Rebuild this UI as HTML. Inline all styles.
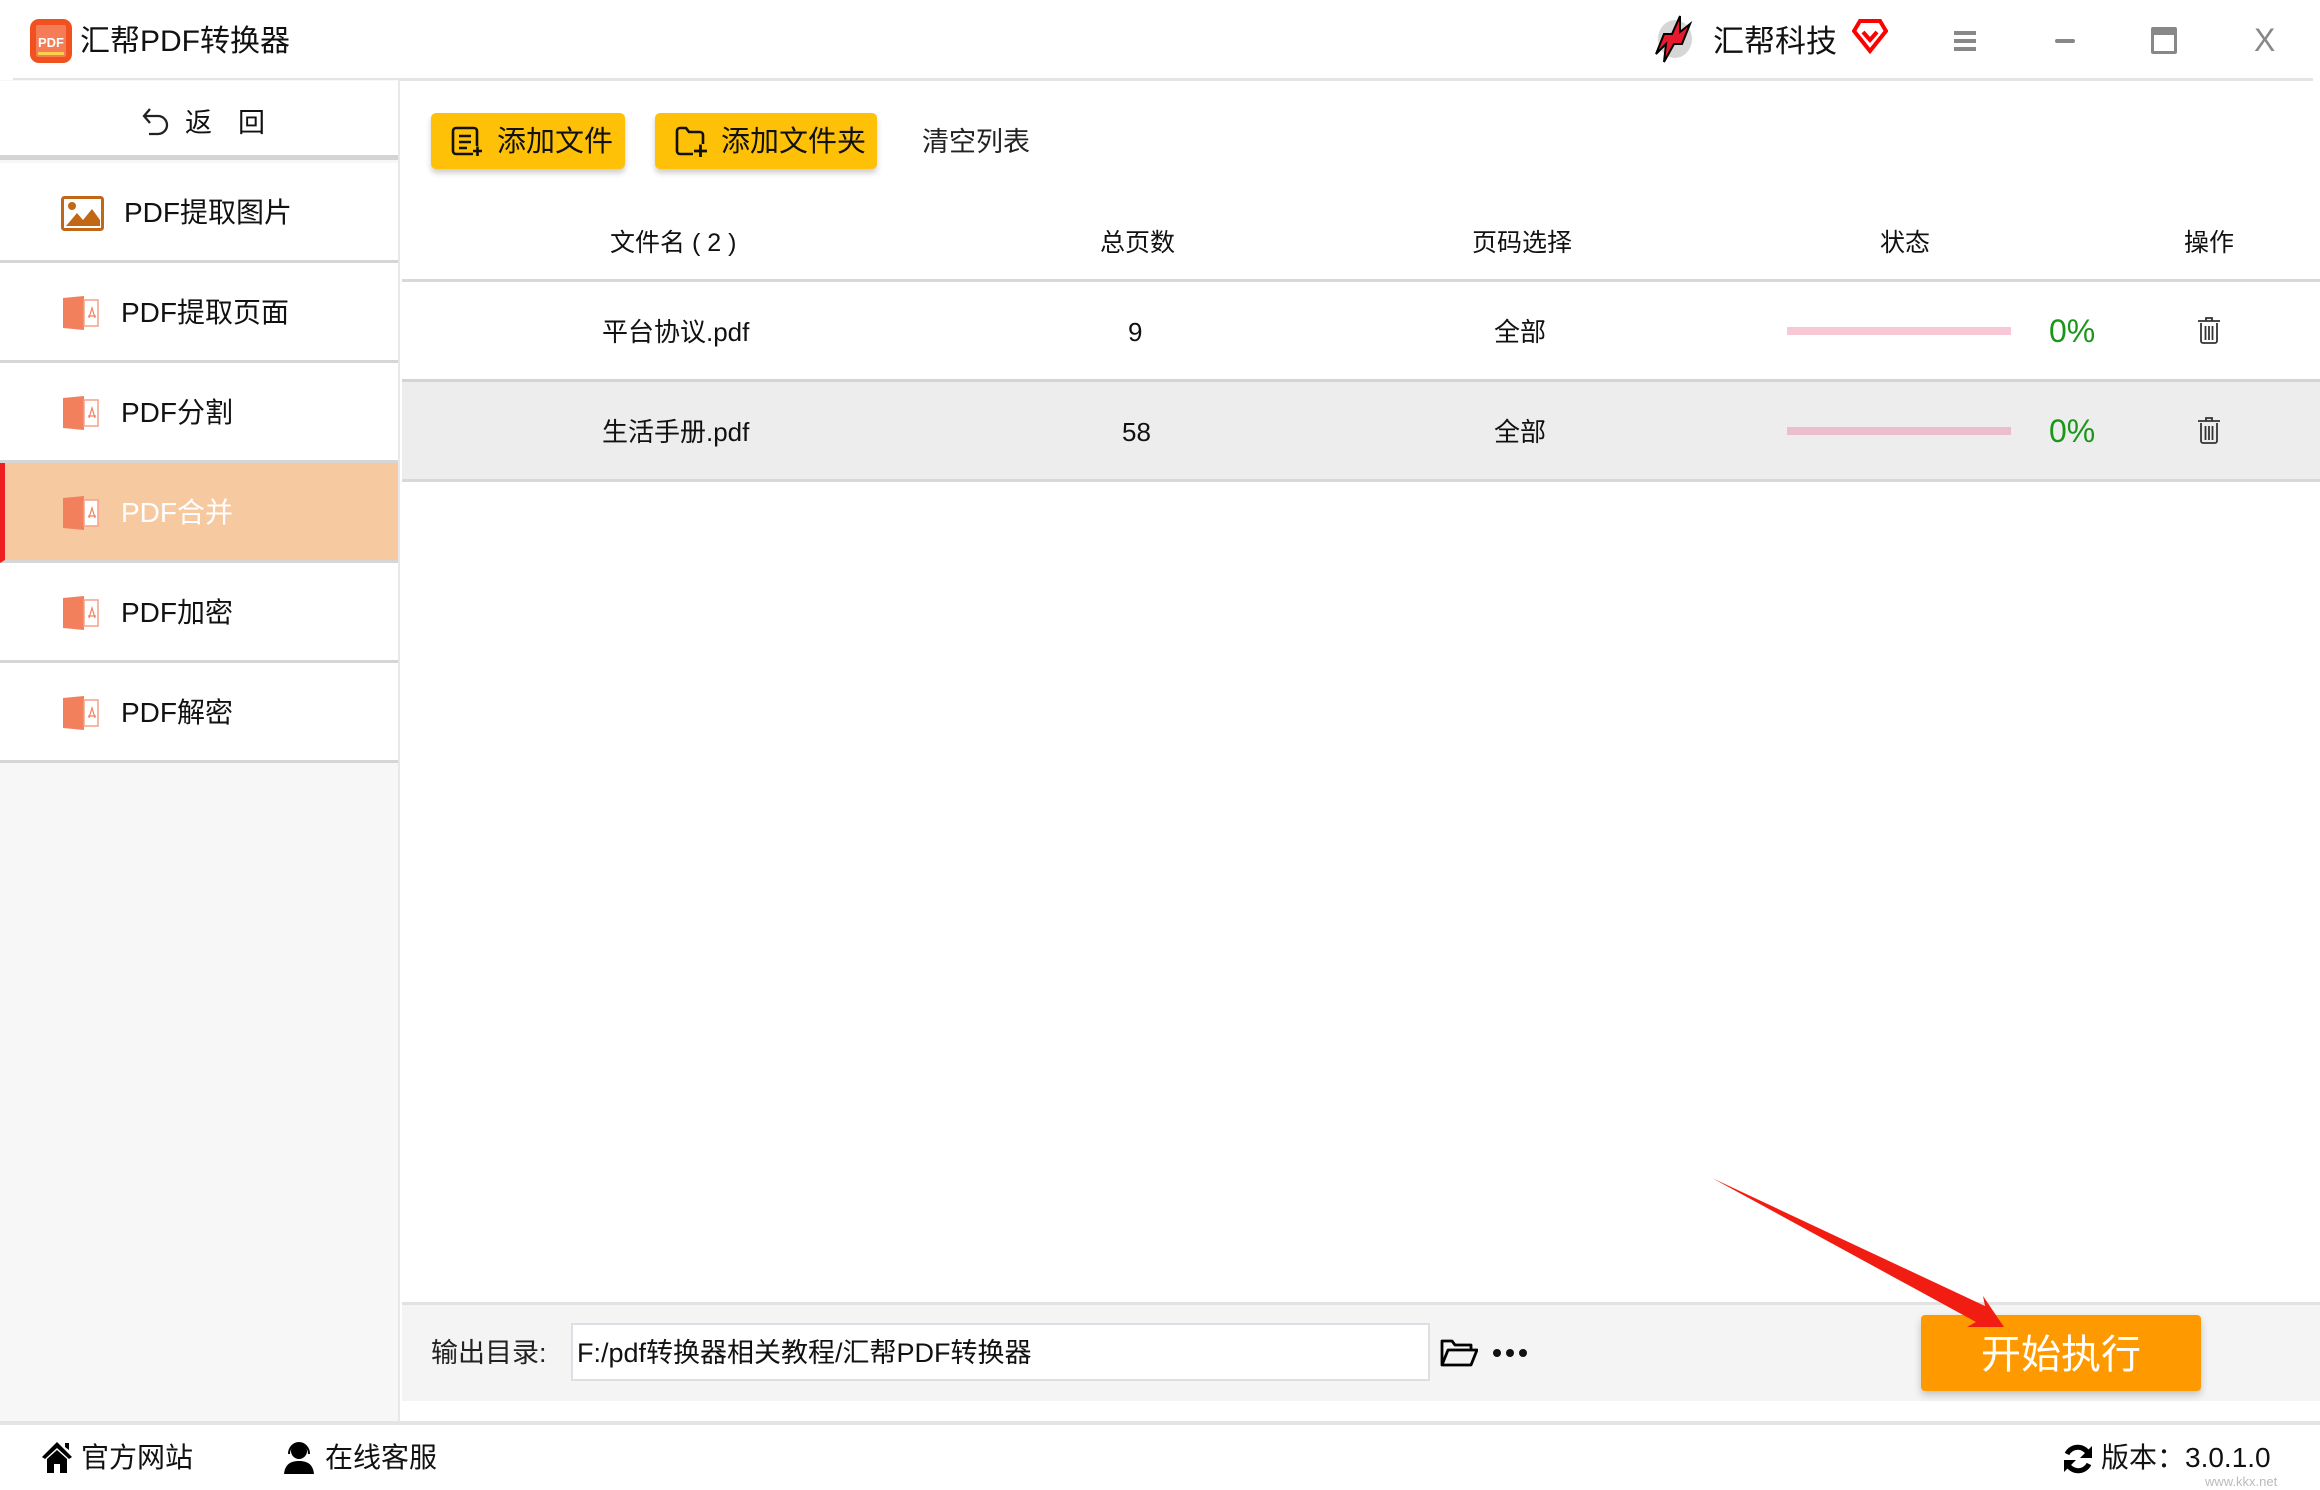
<!DOCTYPE html>
<html><head><meta charset="utf-8">
<style>
*{margin:0;padding:0;box-sizing:border-box}
body{width:2320px;height:1490px;position:relative;background:#fff;font-family:"Liberation Sans","Noto Sans CJK SC",sans-serif;color:#111;overflow:hidden}
.a{position:absolute}
.t{position:absolute;white-space:nowrap;line-height:1}
.side{left:0;top:80px;width:400px;height:1343px;background:#f7f7f7;border-right:2px solid #e8e8e8}
.item{position:absolute;left:0;width:398px;height:100px;background:#fff;border-bottom:3px solid #d6d6d6}
.item .t{left:121px;top:36px;font-size:28px}
.btn{position:absolute;top:113px;height:56px;background:#ffc107;border-radius:5px;box-shadow:0 4px 6px rgba(0,0,0,.2);font-size:29px}
.hd{font-size:25px;top:231px}
.cell{font-size:26px}
</style></head><body>
<svg class="a" style="left:30px;top:19px" width="42" height="44" viewBox="0 0 42 44"><rect x="0" y="0" width="42" height="44" rx="9" fill="#f1501f"/><rect x="6" y="6" width="30" height="32" rx="2" fill="#fff" opacity=".25"/><text x="21" y="28" font-size="13" font-weight="bold" fill="#fff" text-anchor="middle" font-family="Liberation Sans">PDF</text><rect x="8" y="33" width="26" height="3" fill="#ffd24a"/></svg>
<div class="t" style="left:80px;top:27px;font-size:30px">汇帮PDF转换器</div>
<div class="a" style="left:13px;top:78px;width:2300px;height:3px;background:#e4e4e4"></div>
<svg class="a" style="left:1650px;top:14px" width="46" height="50" viewBox="0 0 46 50"><ellipse cx="25" cy="25" rx="17" ry="19" fill="#bbb" opacity=".6"/><path d="M30 2 L22 20 L14 20 L6 40 L16 30 L14 48 L24 30 L32 30 L40 10 L30 18 Z" fill="#e8192c" stroke="#000" stroke-width="2"/></svg>
<div class="t" style="left:1713px;top:26px;font-size:31px">汇帮科技</div>
<svg class="a" style="left:1852px;top:18px" width="36" height="36" viewBox="0 0 36 36"><path d="M8 3 H28 L34 13 L18 33 L2 13 Z" fill="none" stroke="#f00" stroke-width="4"/><path d="M11 14 L18 22 L25 14" fill="none" stroke="#f00" stroke-width="4"/></svg>
<div class="a" style="left:1954px;top:31px;width:22px;height:4px;background:#888"></div>
<div class="a" style="left:1954px;top:39px;width:22px;height:4px;background:#888"></div>
<div class="a" style="left:1954px;top:47px;width:22px;height:4px;background:#888"></div>
<div class="a" style="left:2055px;top:39px;width:20px;height:4px;background:#888;border-radius:2px"></div>
<div class="a" style="left:2151px;top:27px;width:26px;height:27px;border:3px solid #888;border-top:8px solid #888;border-radius:2px"></div>
<div class="t" style="left:2254px;top:24px;font-size:32px;color:#888">X</div>

<div class="a side"></div>
<div class="a" style="left:0;top:81px;width:398px;height:79px;background:#fff;border-bottom:5px solid #d4d4d4"></div>
<svg class="a" style="left:142px;top:107px" width="28" height="30" viewBox="0 0 28 30"><path d="M8 2 L2 9 L8 16 M2 9 H16 A9 9 0 0 1 16 27 H7" fill="none" stroke="#222" stroke-width="2.3"/></svg>
<div class="t" style="left:185px;top:110px;font-size:27px">返</div>
<div class="t" style="left:238px;top:110px;font-size:27px">回</div>

<div class="item" style="top:163px"><svg class="a" style="left:61px;top:33px" width="43" height="35" viewBox="0 0 43 35"><rect x="1.5" y="1.5" width="40" height="32" rx="2" fill="none" stroke="#c26716" stroke-width="3"/><circle cx="11" cy="10" r="4" fill="#c26716"/><path d="M5 30 L16 17 L22 24 L31 13 L39 24 V30 Z" fill="#c26716"/></svg><div class="t" style="left:124px">PDF提取图片</div></div>
<div class="item" style="top:263px"></div>
<div class="item" style="top:363px"></div>
<div class="item" style="top:463px;background:#f7c9a0;border-left:5px solid #f01f1f"></div>
<div class="item" style="top:563px"></div>
<div class="item" style="top:663px"></div>
<div class="t" style="left:121px;top:299px;font-size:28px">PDF提取页面</div>
<div class="t" style="left:121px;top:399px;font-size:28px">PDF分割</div>
<div class="t" style="left:121px;top:499px;font-size:28px;color:#fff">PDF合并</div>
<div class="t" style="left:121px;top:599px;font-size:28px">PDF加密</div>
<div class="t" style="left:121px;top:699px;font-size:28px">PDF解密</div>
<svg width="0" height="0" style="position:absolute"><defs><g id="pd"><path d="M0 2 L21 0 V34 L0 32 Z" fill="#f2805c"/><rect x="21" y="4" width="14" height="26" fill="#fff" stroke="#f5a088" stroke-width="1.5"/><path d="M26 22 L29 12 L32 22 M25 20 L33 20" stroke="#f2805c" stroke-width="1.2" fill="none"/></g></defs></svg>
<svg class="a" style="left:63px;top:296px" width="37" height="36"><use href="#pd"/></svg>
<svg class="a" style="left:63px;top:396px" width="37" height="36"><use href="#pd"/></svg>
<svg class="a" style="left:63px;top:496px" width="37" height="36"><use href="#pd"/></svg>
<svg class="a" style="left:63px;top:596px" width="37" height="36"><use href="#pd"/></svg>
<svg class="a" style="left:63px;top:696px" width="37" height="36"><use href="#pd"/></svg>

<div class="btn" style="left:431px;width:194px"><svg class="a" style="left:20px;top:13px" width="32" height="32" viewBox="0 0 32 32"><path d="M22 28 H5 A3 3 0 0 1 2 25 V5 A3 3 0 0 1 5 2 H23 A3 3 0 0 1 26 5 V20" fill="none" stroke="#111" stroke-width="2.6"/><path d="M8 10 H20 M8 16 H20 M8 22 H16 M22 25 H31 M26.5 20.5 V30" stroke="#111" stroke-width="2.6"/></svg><div class="t" style="left:66px;top:15px">添加文件</div></div>
<div class="btn" style="left:655px;width:222px"><svg class="a" style="left:20px;top:13px" width="34" height="32" viewBox="0 0 34 32"><path d="M18 28 H5 A3 3 0 0 1 2 25 V5 A3 3 0 0 1 5 2 H11 L14 6 H25 A3 3 0 0 1 28 9 V18" fill="none" stroke="#111" stroke-width="2.6"/><path d="M19 25 H32 M25.5 18.5 V31" stroke="#111" stroke-width="2.8"/></svg><div class="t" style="left:66px;top:15px">添加文件夹</div></div>
<div class="t" style="left:922px;top:129px;font-size:27px;color:#222">清空列表</div>

<div class="t hd" style="left:610px">文件名 ( 2 )</div>
<div class="t hd" style="left:1100px">总页数</div>
<div class="t hd" style="left:1472px">页码选择</div>
<div class="t hd" style="left:1880px">状态</div>
<div class="t hd" style="left:2184px">操作</div>
<div class="a" style="left:402px;top:279px;width:1918px;height:3px;background:#d8d8d8"></div>
<div class="a" style="left:402px;top:379px;width:1918px;height:3px;background:#d4d4d4"></div>
<div class="a" style="left:402px;top:382px;width:1918px;height:97px;background:#ededed"></div>
<div class="a" style="left:402px;top:479px;width:1918px;height:3px;background:#d8d8d8"></div>

<div class="t cell" style="left:602px;top:319px">平台协议.pdf</div>
<div class="t cell" style="left:1128px;top:319px">9</div>
<div class="t cell" style="left:1494px;top:319px">全部</div>
<div class="a" style="left:1787px;top:327px;width:224px;height:8px;background:#f9c8d7"></div>
<div class="t" style="left:2049px;top:315px;font-size:32px;color:#1a961a">0%</div>
<div class="t cell" style="left:602px;top:419px">生活手册.pdf</div>
<div class="t cell" style="left:1122px;top:419px">58</div>
<div class="t cell" style="left:1494px;top:419px">全部</div>
<div class="a" style="left:1787px;top:427px;width:224px;height:8px;background:#ecbdcc"></div>
<div class="t" style="left:2049px;top:415px;font-size:32px;color:#1a961a">0%</div>
<svg width="0" height="0" style="position:absolute"><defs><g id="tr"><path d="M1 5 H23 M9 5 V2 H15 V5 M4 7 V25 A2 2 0 0 0 6 27 H18 A2 2 0 0 0 20 25 V7 M8.5 10 V24 M12 10 V24 M15.5 10 V24" fill="none" stroke="#333" stroke-width="1.8"/></g></defs></svg>
<svg class="a" style="left:2197px;top:316px" width="24" height="28"><use href="#tr"/></svg>
<svg class="a" style="left:2197px;top:416px" width="24" height="28"><use href="#tr"/></svg>

<div class="a" style="left:402px;top:1302px;width:1918px;height:3px;background:#e2e2e2"></div>
<div class="a" style="left:402px;top:1305px;width:1918px;height:96px;background:#f4f4f4"></div>
<div class="t" style="left:431px;top:1340px;font-size:27px;color:#222">输出目录:</div>
<div class="a" style="left:571px;top:1323px;width:859px;height:58px;background:#fff;border:2px solid #dedee4"></div>
<div class="t" style="left:577px;top:1340px;font-size:27px">F:/pdf转换器相关教程/汇帮PDF转换器</div>
<svg class="a" style="left:1440px;top:1338px" width="38" height="30" viewBox="0 0 38 30"><path d="M2 27 V3 H12 L15 7 H31 V12 M2 27 L8 12 H37 L31 27 Z" fill="none" stroke="#000" stroke-width="2.8" stroke-linejoin="round"/></svg>
<div class="a" style="left:1493px;top:1349px;width:8px;height:8px;border-radius:50%;background:#111;box-shadow:13px 0 #111,26px 0 #111"></div>
<div class="a" style="left:1921px;top:1315px;width:280px;height:76px;background:#fe9a00;border-radius:4px;box-shadow:0 4px 8px rgba(0,0,0,.2)"></div>
<div class="t" style="left:1981px;top:1335px;font-size:40px;color:#fff">开始执行</div>
<svg class="a" style="left:0;top:0" width="2320" height="1490"><path d="M1712 1178 L1985 1306 L1983 1296 L2004 1327 L1967 1327 L1976 1322 Z" fill="#f21d12"/></svg>

<div class="a" style="left:0;top:1421px;width:2320px;height:4px;background:#e4e4e4"></div>
<svg class="a" style="left:41px;top:1440px" width="32" height="34" viewBox="0 0 32 34"><path d="M16 2 L1 17 L4 19 L16 8 L28 19 L31 17 Z M24 3 H28 V10 L24 7 Z M6 19 L16 10 L26 19 V33 H19 V24 H13 V33 H6 Z" fill="#000"/></svg>
<div class="t" style="left:81px;top:1444px;font-size:28px">官方网站</div>
<svg class="a" style="left:282px;top:1440px" width="34" height="34" viewBox="0 0 34 34"><circle cx="17" cy="11" r="8" fill="#000"/><path d="M7 14 A10 11 0 0 1 27 14" fill="none" stroke="#000" stroke-width="2"/><path d="M2 34 C3 24 9 21 17 21 C25 21 31 24 32 34 Z" fill="#000"/></svg>
<div class="t" style="left:325px;top:1444px;font-size:28px">在线客服</div>
<svg class="a" style="left:2062px;top:1443px" width="32" height="32" viewBox="0 0 32 32"><path d="M27 12 A12 12 0 0 0 5 11 M5 20 A12 12 0 0 0 27 21" fill="none" stroke="#000" stroke-width="5"/><path d="M30 3 V15 H18 Z M2 29 V17 H14 Z" fill="#000"/></svg>
<div class="t" style="left:2101px;top:1444px;font-size:28px">版本：3.0.1.0</div>
<div class="t" style="left:2205px;top:1475px;font-size:13px;color:#bbb">www.kkx.net</div>
</body></html>
